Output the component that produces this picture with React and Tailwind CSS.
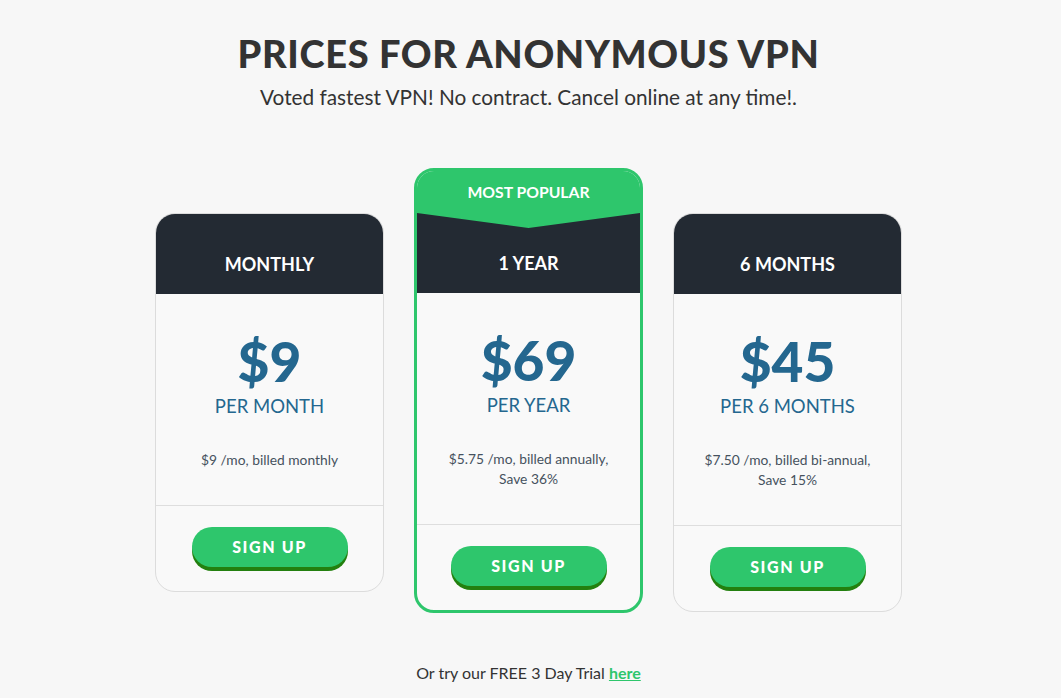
import React from "react";

const plans = [
  {
    name: "MONTHLY",
    price: "$9",
    period: "PER MONTH",
    lines: ["$9 /mo, billed monthly"],
  },
  {
    name: "1 YEAR",
    price: "$69",
    period: "PER YEAR",
    lines: ["$5.75 /mo, billed annually,", "Save 36%"],
    popular: true,
  },
  {
    name: "6 MONTHS",
    price: "$45",
    period: "PER 6 MONTHS",
    lines: ["$7.50 /mo, billed bi-annual,", "Save 15%"],
  },
];

function PlanCard({ plan }) {
  const popular = plan.popular;
  return (
    <div
      className={`w-[229px] overflow-hidden rounded-[20px] bg-[#f9f9f9] ${
        popular ? "border-[3px] border-[#2ec66c]" : "mt-[45px] border border-[#dcdcdc]"
      }`}
    >
      {popular && (
        <div className="bg-[#2ec66c]">
          <div className="flex h-[42px] items-center justify-center text-[15.75px] font-bold text-white">
            MOST POPULAR
          </div>
          <div className="h-[80px] bg-[#232a33] pt-[36px] text-center text-[18px] leading-[28px] font-bold text-white [clip-path:polygon(0_0,50%_15px,100%_0,100%_100%,0_100%)]">
            {plan.name}
          </div>
        </div>
      )}
      {!popular && (
        <div className="h-[80px] bg-[#232a33] pt-[36px] text-center text-[18px] leading-[28px] font-bold text-white">
          {plan.name}
        </div>
      )}

      <div className="border-b border-[#dedede] pt-[40px] pb-[35px] text-center">
        <div className="text-[55px] leading-[54px] font-black text-[#24678f]">{plan.price}</div>
        <div className="mt-[4px] text-[18.5px] leading-[28px] text-[#24678f]">{plan.period}</div>
        <div className="mt-[30px] text-[13.8px] leading-[20px] text-[#46525e]">
          {plan.lines.map((l) => (
            <div key={l}>{l}</div>
          ))}
        </div>
      </div>

      <div className="flex justify-center pt-[21px] pb-[24px]">
        <button className="h-[40px] w-[156px] rounded-full bg-[#2ec66c] text-[16px] font-black tracking-[1.6px] text-white shadow-[0_4px_0_#23800f]">
          SIGN UP
        </button>
      </div>
    </div>
  );
}

export default function App() {
  return (
    <div className="min-h-[698px] bg-[#f7f7f7] pr-[4px] text-[#333] [font-family:Lato,'Open_Sans',sans-serif]">
      <div className="pt-[30px] text-center">
        <h1 className="text-[38px] leading-[46px] font-black tracking-[0.65px] text-[#333]">
          PRICES FOR ANONYMOUS VPN
        </h1>
        <p className="mt-[6px] text-[20.8px] leading-[30px] text-[#333]">
          Voted fastest VPN! No contract. Cancel online at any time!.
        </p>
      </div>

      <div className="mt-[56px] flex items-start justify-center gap-[30px]">
        {plans.map((p) => (
          <PlanCard key={p.name} plan={p} />
        ))}
      </div>

      <p className="mt-[48px] text-center text-[16px] leading-[24px] text-[#333]">
        Or try our FREE 3 Day Trial{" "}
        <a href="#" className="font-bold text-[#2ec66c] underline">
          here
        </a>
      </p>
    </div>
  );
}
